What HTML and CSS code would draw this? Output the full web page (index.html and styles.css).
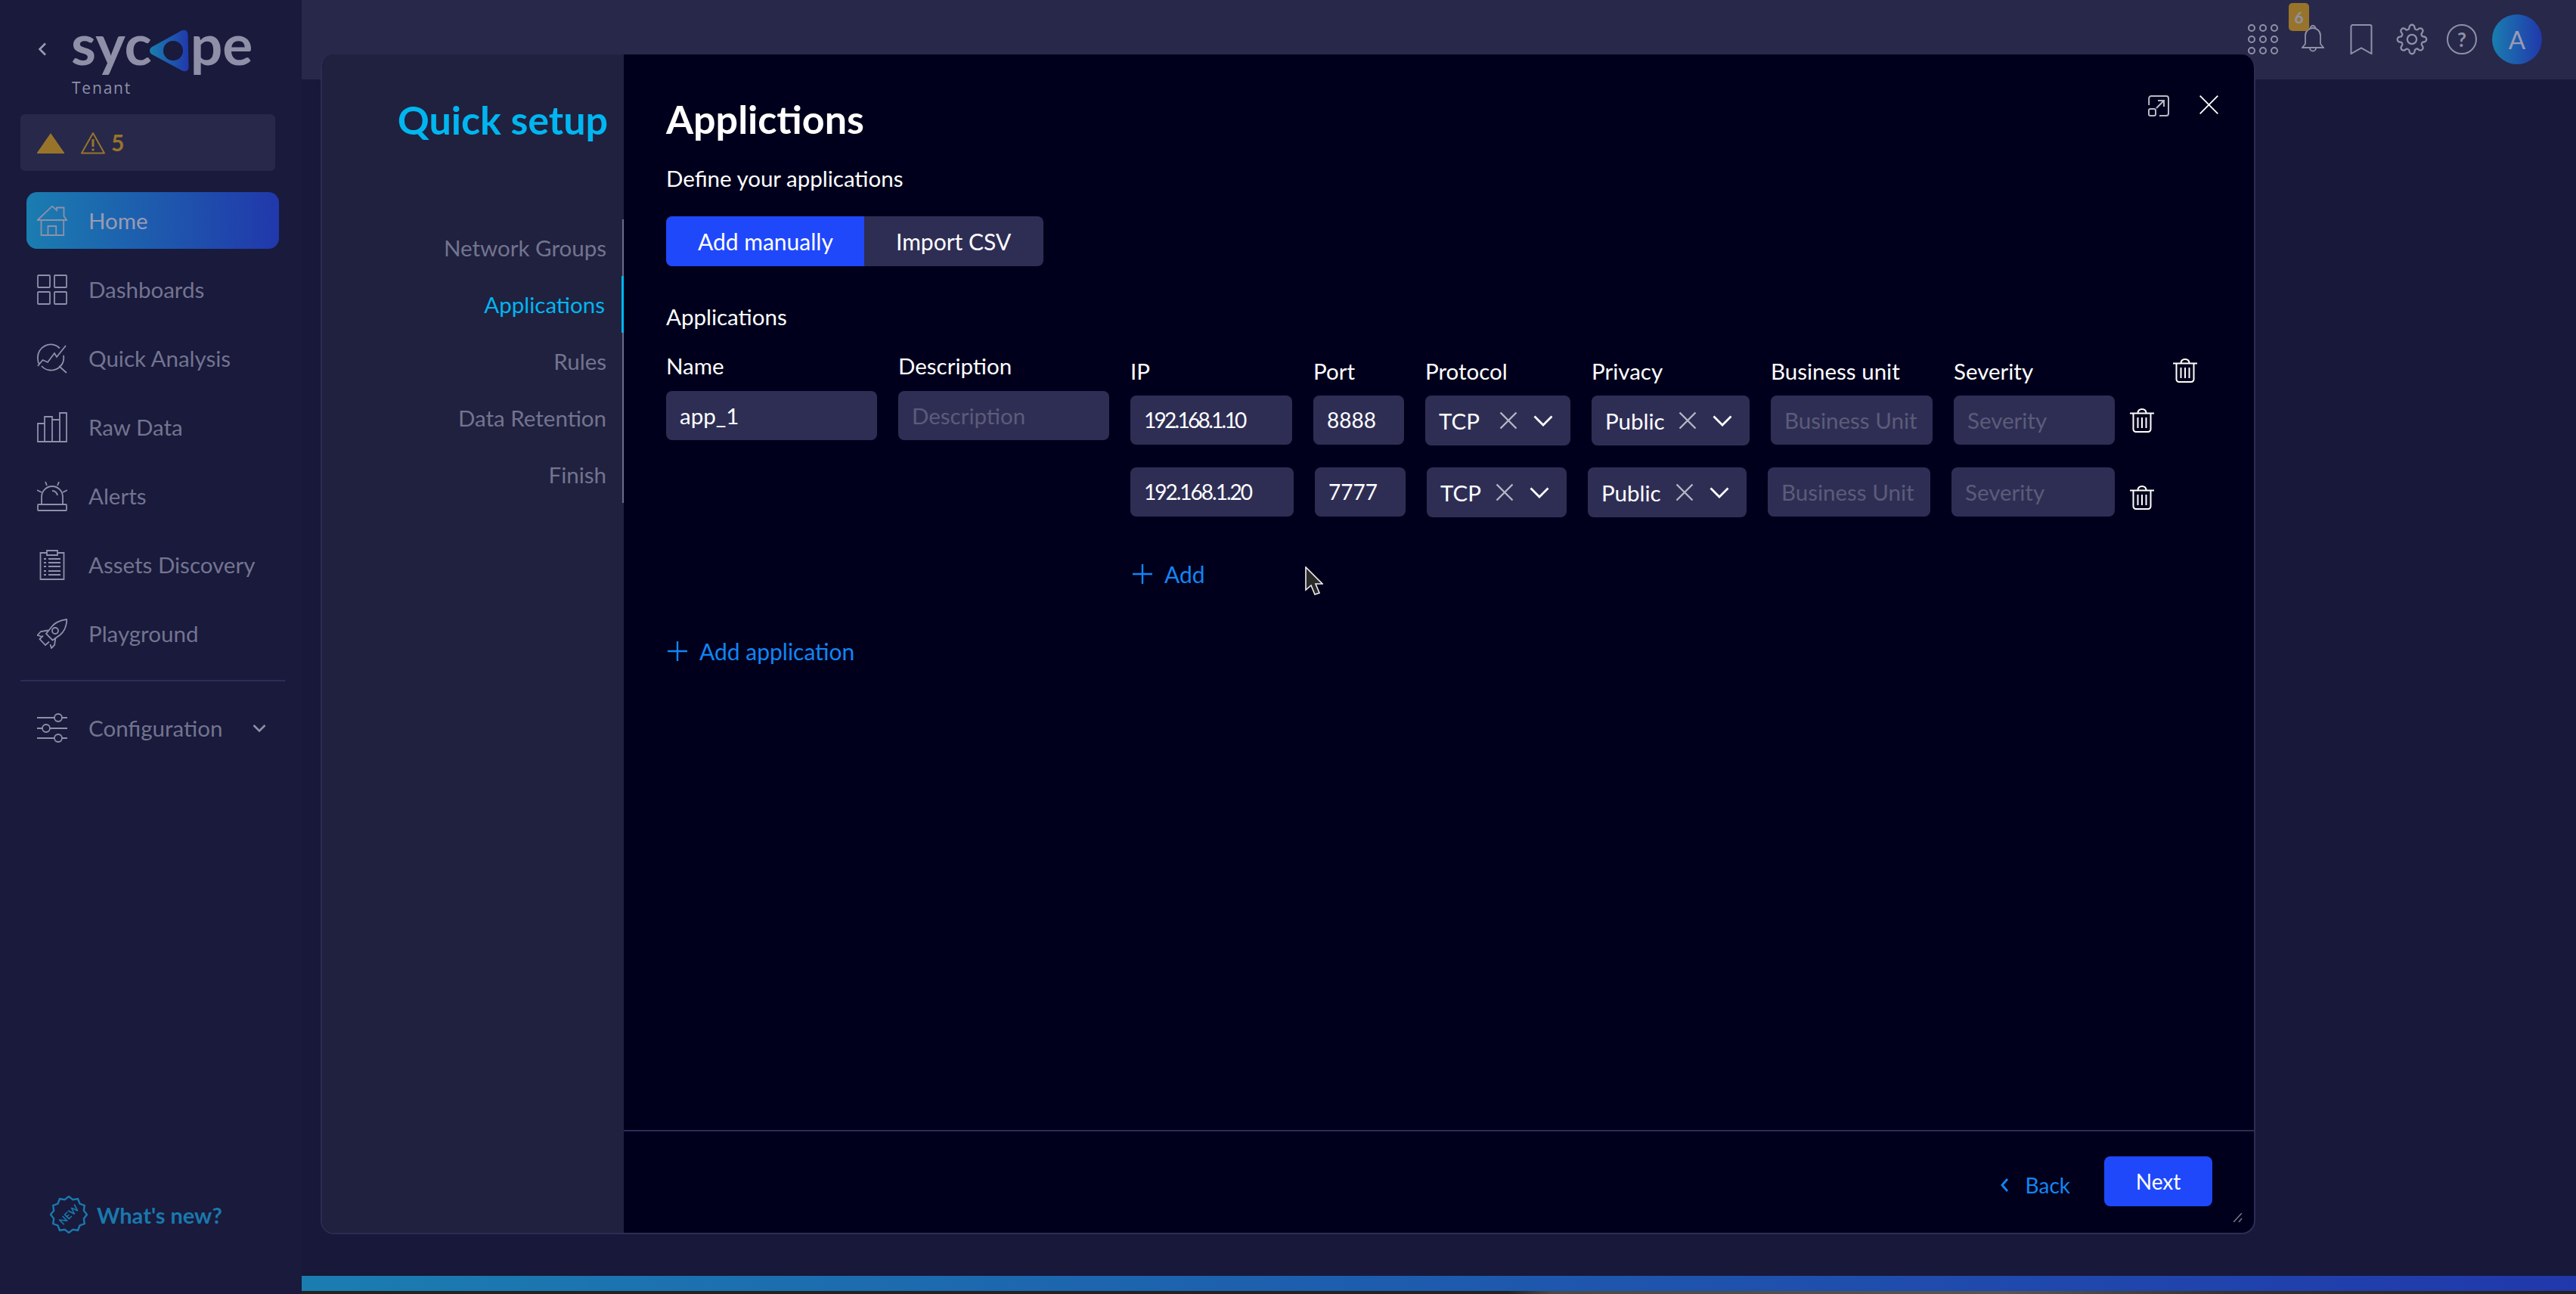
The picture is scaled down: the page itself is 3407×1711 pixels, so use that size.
FILE: index.html
```html
<!DOCTYPE html>
<html lang="en">
<head>
    <meta charset="UTF-8">
    <title>Quick setup</title>
    <link rel="stylesheet" href="styles.css">
</head>
<body>
    <svg class="defs" width="0" height="0">
        <defs>
            <symbol id="i-trash" viewBox="0 0 32 32">
                <path d="M0 6.5h32M4.500 6.500v21a3.500 3.500 0 0 0 3.500 3.500h16a3.500 3.500 0 0 0 3.500-3.500v-21M10.500 6.500c0-3.500 2-5.500 5.500-5.500s5.500 2 5.500 5.500M10.500 12v14M16 12v14M21.500 12v14" fill="none" stroke="currentColor" stroke-width="2"/>
            </symbol>
            <symbol id="i-x" viewBox="0 0 24 24">
                <path d="M1.500 1.500l21 21M22.500 1.500l-21 21" fill="none" stroke="currentColor" stroke-width="2.400"/>
            </symbol>
            <symbol id="i-chev" viewBox="0 0 26 15">
                <path d="M1.500 1.500L13 13 24.500 1.500" fill="none" stroke="currentColor" stroke-width="2.800"/>
            </symbol>
            <symbol id="i-plus" viewBox="0 0 26 26">
                <path d="M13 0v26M0 13h26" fill="none" stroke="currentColor" stroke-width="2.400"/>
            </symbol>
        </defs>
    </svg>

    <div class="app">
        <aside class="sidebar">
            <div class="brand">
                <svg class="brand-back" viewBox="0 0 12 18"><path d="M10 1.500L2.500 9l7.500 7.500" fill="none" stroke="currentColor" stroke-width="2.600"/></svg>
                <div class="brand-text">
                    <div class="logo">
                        <span>syc</span><span class="logo-end">pe</span>
                        <svg class="logo-mark" viewBox="0 0 52 56">
                            <defs><linearGradient id="g-logo"><stop offset="0" stop-color="#1a7db0"/><stop offset="1" stop-color="#2138ab"/></linearGradient></defs>
                            <path d="M3 23L42 1.500c4-2 8-.5 8.500 4.500l1 44c0 4.500-4.500 6.500-8.500 4.500L3 33c-4-2.500-4-7.500 0-10z" fill="url(#g-logo)"/>
                            <circle cx="31" cy="28" r="13" fill="#191a3c"/>
                        </svg>
                    </div>
                    <div class="tenant">Tenant</div>
                </div>
            </div>

            <div class="alert-box">
                <svg class="alert-solid" viewBox="0 0 36 27"><path d="M18 0L36 26v1H0v-1z" fill="currentColor"/></svg>
                <svg class="alert-line" viewBox="0 0 32 30"><path d="M16 2L31 28.500H1z" fill="none" stroke="currentColor" stroke-width="2" stroke-linejoin="round"/><path d="M16 10v10M16 22.500v3" stroke="currentColor" stroke-width="3" fill="none"/></svg>
                <span class="alert-count">5</span>
            </div>

            <nav class="nav">
                <a class="nav-item active">
                    <svg class="nav-icon" viewBox="0 0 40 40"><path d="M.7 19L20 .7l6 5.300V2.500h9.500v11.500l3.800 5zM5.500 19v20h29.700V19M14.500 39V27h10.700v12"/></svg>
                    <span>Home</span>
                </a>
                <a class="nav-item">
                    <svg class="nav-icon" viewBox="0 0 40 40"><rect x="1" y="1" width="16" height="16" rx="1"/><rect x="23" y="1" width="16" height="16" rx="1"/><rect x="1" y="23" width="16" height="16" rx="1"/><rect x="23" y="23" width="16" height="16" rx="1"/></svg>
                    <span>Dashboards</span>
                </a>
                <a class="nav-item">
                    <svg class="nav-icon" viewBox="0 0 40 40"><path d="M30 6.500A17 17 0 0 0 1 20c0 2.500.5 5 1.500 7M6 30a17 17 0 0 0 23 2 17 17 0 0 0 6-16M29 30l10 9M1 30l6.500-8 6.500 3 9-12 3 5L38 3"/></svg>
                    <span>Quick Analysis</span>
                </a>
                <a class="nav-item">
                    <svg class="nav-icon" viewBox="0 0 40 40"><path d="M1 15h9v24H1zM10 6h10v33H10zM20 10h10v29H20zM30 1h9v38h-9z"/></svg>
                    <span>Raw Data</span>
                </a>
                <a class="nav-item">
                    <svg class="nav-icon" viewBox="0 0 40 40"><rect x="1" y="31" width="38" height="8" rx="1"/><path d="M6 31V21a14 14 0 0 1 28 0v10M20 13c3 0 6 2 7 6M11 1l2 5M29 1l-2 5M0 12l6 3M40 12l-6 3"/></svg>
                    <span>Alerts</span>
                </a>
                <a class="nav-item">
                    <svg class="nav-icon" viewBox="0 0 40 40"><path d="M13 4H4.500v35h31V4H27M13 1h14v6H13zM15 12h16M15 17h16M15 22h16M15 28h16M15 33h16M9 12h3M9 17h3M9 22h3M9 28h3M9 33h3"/></svg>
                    <span>Assets Discovery</span>
                </a>
                <a class="nav-item">
                    <svg class="nav-icon" viewBox="0 0 40 40"><path d="M39.500 1C31 2 24 5 20 10L12 20l8.500 8.500 10-7C36 17 39 10 39.500 1zM14.500 15.500L5 17l-4.500 5 5 1.500M24.500 25.500L23 35l-4 4-1.500-5M8 22.500L3.500 27l7.500 8 5-4.500"/><circle cx="24" cy="16" r="4"/></svg>
                    <span>Playground</span>
                </a>
            </nav>

            <div class="nav-divider"></div>

            <a class="nav-item config">
                <svg class="nav-icon" viewBox="0 0 40 40"><path d="M0 6h23M33 6h7M0 20h7M17 20h23M0 33h23M33 33h7"/><circle cx="28" cy="6" r="5"/><circle cx="12" cy="20" r="5"/><circle cx="28" cy="33" r="5"/></svg>
                <span>Configuration</span>
                <svg class="config-chev" viewBox="0 0 18 12"><path d="M1.500 2L9 9.500 16.500 2" fill="none" stroke="currentColor" stroke-width="2.600"/></svg>
            </a>

            <a class="whats-new">
                <svg class="whats-icon" viewBox="0 0 50 50">
                    <polygon points="49,25 44.800,19.700 45.800,13 39.500,10.500 37,4.200 30.300,5.200 25,1 19.700,5.200 13,4.200 10.500,10.500 4.200,13 5.200,19.700 1,25 5.200,30.300 4.200,37 10.500,39.500 13,45.800 19.700,44.800 25,49 30.300,44.800 37,45.800 39.500,39.500 45.800,37 44.800,30.300" fill="none" stroke="currentColor" stroke-width="2.400"/>
                    <text class="whats-badge" x="25" y="30" text-anchor="middle" transform="rotate(-45 25 25)">NEW</text>
                </svg>
                <span>What's new?</span>
            </a>
        </aside>

        <main class="main">
            <header class="topbar">
                <svg class="top-icon grid-icon" viewBox="0 0 40 40"><circle cx="5" cy="5" r="4"/><circle cx="20" cy="5" r="4"/><circle cx="35" cy="5" r="4"/><circle cx="5" cy="20" r="4"/><circle cx="20" cy="20" r="4"/><circle cx="35" cy="20" r="4"/><circle cx="5" cy="35" r="4"/><circle cx="20" cy="35" r="4"/><circle cx="35" cy="35" r="4"/></svg>
                <div class="bell">
                    <svg class="top-icon bell-icon" viewBox="0 0 30 36"><path d="M1 30h28l-4-5V14C25 8 20 4 15 4S5 8 5 14v11zM11.500 4.500a3.500 3.500 0 1 1 7 0M11 30.500a4 4 0 0 0 8 0"/></svg>
                    <span class="bell-badge">6</span>
                </div>
                <svg class="top-icon mark-icon" viewBox="0 0 30 40"><path d="M1.500 39V3a2 2 0 0 1 2-2h23a2 2 0 0 1 2 2v36L15 31.500z"/></svg>
                <svg class="top-icon gear-icon" viewBox="0 0 24 24"><circle cx="12" cy="12" r="3.500"/><path d="M19.400 15a1.650 1.650 0 0 0 .33 1.820l.06.06a2 2 0 0 1 0 2.830 2 2 0 0 1-2.830 0l-.06-.06a1.650 1.650 0 0 0-1.820-.33 1.650 1.650 0 0 0-1 1.510V21a2 2 0 0 1-2 2 2 2 0 0 1-2-2v-.09A1.650 1.650 0 0 0 9 19.400a1.650 1.650 0 0 0-1.820.33l-.06.06a2 2 0 0 1-2.830 0 2 2 0 0 1 0-2.830l.06-.06a1.650 1.650 0 0 0 .33-1.820 1.650 1.650 0 0 0-1.510-1H3a2 2 0 0 1-2-2 2 2 0 0 1 2-2h.09A1.650 1.650 0 0 0 4.600 9a1.650 1.650 0 0 0-.33-1.820l-.06-.06a2 2 0 0 1 0-2.830 2 2 0 0 1 2.830 0l.06.06a1.650 1.650 0 0 0 1.820.33H9a1.650 1.650 0 0 0 1-1.510V3a2 2 0 0 1 2-2 2 2 0 0 1 2 2v.09a1.650 1.650 0 0 0 1 1.510 1.650 1.650 0 0 0 1.820-.33l.06-.06a2 2 0 0 1 2.830 0 2 2 0 0 1 0 2.830l-.06.06a1.650 1.650 0 0 0-.33 1.820V9a1.650 1.650 0 0 0 1.510 1H21a2 2 0 0 1 2 2 2 2 0 0 1-2 2h-.09a1.650 1.650 0 0 0-1.510 1z"/></svg>
                <div class="help">?</div>
                <div class="avatar">A</div>
            </header>
            <div class="content"></div>
            <div class="strip"></div>
            <div class="taskbar"></div>

            <section class="modal">
                <div class="modal-side">
                    <h2 class="side-title">Quick setup</h2>
                    <ul class="steps">
                        <li>Network Groups</li>
                        <li class="current">Applications</li>
                        <li>Rules</li>
                        <li>Data Retention</li>
                        <li>Finish</li>
                    </ul>
                </div>

                <div class="modal-body">
                    <div class="modal-tools">
                        <svg class="tool-expand" viewBox="0 0 28 28"><path d="M1.200 13V4a3 3 0 0 1 3-3H24a3 3 0 0 1 3 3v20a3 3 0 0 1-3 3h-9M11 17L20 8M13 7h8v8" fill="none" stroke="currentColor" stroke-width="2"/><rect x="1" y="18" width="9" height="9" rx="2" fill="none" stroke="currentColor" stroke-width="2"/></svg>
                        <svg class="tool-close" viewBox="0 0 25 25"><path d="M.7 .7l23.600 23.600M24.300 .7L.7 24.300" fill="none" stroke="currentColor" stroke-width="1.800"/></svg>
                    </div>

                    <div class="form">
                        <h1 class="form-title">Applictions</h1>
                        <p class="form-sub">Define your applications</p>
                        <div class="tabs">
                            <div class="tab selected">Add manually</div>
                            <div class="tab">Import CSV</div>
                        </div>
                        <div class="section-label">Applications</div>

                        <div class="app-block">
                            <div class="app-col">
                                <div class="col-label">Name</div>
                                <div class="field">app_1</div>
                            </div>
                            <div class="app-col">
                                <div class="col-label">Description</div>
                                <div class="field empty">Description</div>
                            </div>
                            <div class="rules">
                                <div class="rule-row rule-head">
                                    <div>IP</div>
                                    <div>Port</div>
                                    <div>Protocol</div>
                                    <div>Privacy</div>
                                    <div>Business unit</div>
                                    <div>Severity</div>
                                    <svg class="trash trash-app"><use href="#i-trash"/></svg>
                                </div>
                                <div class="rule-row row-one">
                                    <div class="field num ip">192.168.1.10</div>
                                    <div class="field num">8888</div>
                                    <div class="field select"><span>TCP</span><svg class="sel-x"><use href="#i-x"/></svg><svg class="sel-chev"><use href="#i-chev"/></svg></div>
                                    <div class="field select"><span>Public</span><svg class="sel-x"><use href="#i-x"/></svg><svg class="sel-chev"><use href="#i-chev"/></svg></div>
                                    <div class="field empty">Business Unit</div>
                                    <div class="field empty">Severity</div>
                                    <svg class="trash"><use href="#i-trash"/></svg>
                                </div>
                                <div class="rule-row row-two">
                                    <div class="field num ip">192.168.1.20</div>
                                    <div class="field num">7777</div>
                                    <div class="field select"><span>TCP</span><svg class="sel-x"><use href="#i-x"/></svg><svg class="sel-chev"><use href="#i-chev"/></svg></div>
                                    <div class="field select"><span>Public</span><svg class="sel-x"><use href="#i-x"/></svg><svg class="sel-chev"><use href="#i-chev"/></svg></div>
                                    <div class="field empty">Business Unit</div>
                                    <div class="field empty">Severity</div>
                                    <svg class="trash"><use href="#i-trash"/></svg>
                                </div>
                                <a class="link add-rule"><svg class="plus"><use href="#i-plus"/></svg>Add</a>
                            </div>
                        </div>

                        <a class="link add-app"><svg class="plus"><use href="#i-plus"/></svg>Add application</a>
                    </div>

                    <footer class="modal-foot">
                        <a class="link back"><svg class="back-chev" viewBox="0 0 12 20"><path d="M10 2L3 10l7 8" fill="none" stroke="currentColor" stroke-width="2.800"/></svg>Back</a>
                        <button class="next" type="button">Next</button>
                    </footer>
                    <svg class="resize" viewBox="0 0 13 12"><path d="M1 12L12 0M8 12l4-5" fill="none" stroke="#77778a" stroke-width="1.500"/></svg>
                </div>
            </section>

            <svg class="cursor" viewBox="0 0 24 38"><path d="M1 1v30l7-6 5 12 6-2-5-12h9z" fill="#2a2a2a" stroke="#eee" stroke-width="1.600"/></svg>
        </main>
    </div>
</body>
</html>
```

FILE: styles.css
```css
* {
    box-sizing: border-box;
}

html, body {
    margin: 0;
    height: 100%;
}

body {
    font-family: "Lato", "Open Sans", sans-serif;
    background-color: #17183a;
    color: #fff;
    overflow: hidden;
}

.defs {
    position: absolute;
}

.app {
    display: flex;
    height: 1711px;
}

/* left menu */
.sidebar {
    width: 399px;
    flex-shrink: 0;
    display: flex;
    flex-direction: column;
    background-color: #191a3c;
    color: #73748f;
    font-size: 29.500px;
}

.brand {
    height: 151px;
    display: flex;
    padding: 0 0 0 50px;
}

.brand-back {
    width: 12px;
    height: 18px;
    margin-top: 56px;
    color: #9a9bb2;
}

.brand-text {
    margin-left: 33px;
    color: #8f90a8;
}

.logo {
    position: relative;
    display: flex;
    width: 240px;
    height: 104px;
    padding-top: 12px;
    margin-left: -1px;
    font-size: 75px;
    font-weight: 700;
    line-height: 90px;
}

.logo-end {
    margin-left: 51px;
}

.logo-mark {
    position: absolute;
    left: 104px;
    top: 39px;
    width: 52px;
    height: 56px;
}

.tenant {
    font-size: 21px;
    line-height: 24px;
    letter-spacing: 1.800px;
    font-family: "Open Sans", sans-serif;
}

.alert-box {
    width: 337px;
    height: 75px;
    margin-left: 27px;
    display: flex;
    align-items: center;
    padding-left: 22px;
    background-color: #28284a;
    border-radius: 6px;
    color: #98742b;
}

.alert-solid {
    width: 36px;
    height: 27px;
    margin-top: 1px;
}

.alert-line {
    width: 32px;
    height: 30px;
    margin-left: 22px;
}

.alert-count {
    margin: -2px 0 0 8px;
    font-size: 30px;
    font-weight: 700;
}

.nav {
    display: flex;
    flex-direction: column;
    gap: 16px;
    margin-top: 28px;
}

.nav-item {
    width: 334px;
    height: 75px;
    margin-left: 35px;
    display: flex;
    align-items: center;
    padding-left: 14px;
    border-radius: 14px;
}

.nav-item.active {
    background: linear-gradient(90deg, #1a7db0, #2138ab);
    color: #9a9bb4;
}

.nav-icon {
    width: 40px;
    height: 40px;
    margin-right: 28px;
    fill: none;
    stroke: #8f90a8;
    stroke-width: 1.800;
}

.nav-divider {
    width: 350px;
    height: 2px;
    margin: 24px 0 0 27px;
    background-color: #2c2d55;
}

.config {
    margin-top: 24px;
    position: relative;
}

.config-chev {
    position: absolute;
    left: 299px;
    top: 32px;
    width: 18px;
    height: 12px;
    color: #8f90a8;
}

.whats-new {
    margin-top: auto;
    margin-bottom: 80px;
    padding-left: 66px;
    display: flex;
    align-items: center;
    gap: 12px;
    color: #1a78ac;
    font-size: 29px;
    font-weight: 700;
}

.whats-icon {
    width: 50px;
    height: 50px;
}

.whats-badge {
    font-size: 13px;
    font-weight: 700;
    fill: currentColor;
}

/* page behind the dialog */
.main {
    position: relative;
    flex: 1;
    display: flex;
    flex-direction: column;
}

.topbar {
    height: 105px;
    background-color: #28284a;
    display: flex;
    justify-content: flex-end;
    align-items: flex-start;
    padding-right: 45px;
    color: #8f90a8;
}

.top-icon {
    fill: none;
    stroke: #8f90a8;
    stroke-width: 2;
}

.grid-icon {
    width: 40px;
    height: 40px;
    margin-top: 32px;
}

.bell {
    position: relative;
    width: 32px;
    height: 38px;
    margin: 33px 0 0 31px;
}

.bell-icon {
    width: 30px;
    height: 36px;
    stroke-width: 1.800;
}

.bell-badge {
    position: absolute;
    left: -17px;
    top: -29px;
    width: 27px;
    height: 37px;
    background-color: #98742b;
    border-radius: 5px;
    text-align: center;
    font-size: 21px;
    font-weight: 700;
    line-height: 37px;
}

.mark-icon {
    width: 30px;
    height: 40px;
    margin: 32px 0 0 32px;
}

.gear-icon {
    width: 42px;
    height: 42px;
    margin: 31px 0 0 31px;
    stroke-width: 1.300;
}

.help {
    width: 40px;
    height: 40px;
    margin: 32px 0 0 25px;
    border: 2px solid #8f90a8;
    border-radius: 50%;
    text-align: center;
    font-size: 26px;
    font-weight: 700;
    line-height: 36px;
}

.avatar {
    width: 66px;
    height: 66px;
    margin: 19px 0 0 20px;
    border-radius: 50%;
    background: linear-gradient(90deg, #1a7db0, #2138ab);
    text-align: center;
    font-size: 33px;
    line-height: 66px;
    color: #9a9bb4;
}

.content {
    flex: 1;
    background-color: #17183a;
}

.strip {
    height: 20px;
    background: linear-gradient(90deg, #1a7db0, #2138ab);
}

.taskbar {
    height: 4px;
    background: linear-gradient(90deg, #222 0%, #222 53%, #4a4a4a 55%, #555 75%, #333 85%, #222 100%);
}

/* dialog */
.modal {
    position: absolute;
    left: 25px;
    top: 72px;
    width: 2559px;
    height: 1560px;
    display: flex;
    background-color: #00001c;
    border: 2px solid #2c2d55;
    border-top: 0;
    border-radius: 18px;
    overflow: hidden;
}

.modal-side {
    width: 399px;
    flex-shrink: 0;
    background-color: #20213f;
    padding-top: 56px;
}

.side-title {
    margin: 0;
    padding-right: 21px;
    text-align: right;
    color: #00b6f0;
    font-size: 52px;
    font-weight: 700;
    line-height: 60px;
}

.steps {
    list-style: none;
    margin: 102px 0 0;
    padding: 0;
    border-right: 2px solid #6b6c86;
    font-size: 29.500px;
    color: #73748f;
    text-align: right;
}

.steps li {
    position: relative;
    height: 75px;
    padding-right: 21px;
    line-height: 75px;
}

.steps li.current {
    color: #00b6f0;
    padding-right: 23px;
}

.steps li.current::after {
    content: "";
    position: absolute;
    right: -2px;
    top: 0;
    width: 3px;
    height: 75px;
    background-color: #00b6f0;
}

.modal-body {
    position: relative;
    flex: 1;
    display: flex;
    flex-direction: column;
}

.modal-tools {
    position: absolute;
    right: 47px;
    top: 54px;
    display: flex;
    gap: 40px;
    color: #fff;
}

.tool-expand {
    width: 28px;
    height: 28px;
    color: #b8b9c8;
}

.tool-close {
    width: 25px;
    height: 25px;
}

.form {
    flex: 1;
    padding: 55px 0 0 56px;
    font-size: 29.500px;
}

.form-title {
    margin: 0;
    font-size: 52px;
    font-weight: 700;
    line-height: 60px;
}

.form-sub {
    margin: 31px 0 0;
    line-height: 36px;
}

.tabs {
    display: flex;
    width: 499px;
    height: 66px;
    margin-top: 32px;
    border-radius: 8px;
    overflow: hidden;
    background-color: #2e2e55;
    font-size: 30px;
}

.tab {
    padding: 0 42px;
    line-height: 66px;
    white-space: nowrap;
}

.tab.selected {
    width: 262px;
    background-color: #1f48fb;
}

.section-label {
    margin-top: 49px;
    line-height: 36px;
}

.app-block {
    display: flex;
    gap: 28px;
    margin-top: 28px;
}

.app-col {
    width: 279px;
    margin-top: 1px;
}

.col-label {
    height: 36px;
    line-height: 36px;
}

.field {
    height: 65px;
    padding: 0 18px;
    background-color: #2e2e55;
    border-radius: 8px;
    line-height: 65px;
    white-space: nowrap;
    margin-top: 15px;
}

.field.empty {
    color: #5b5c78;
}

.field.num {
    font-size: 28px;
}

.field.select {
    height: 66px;
    display: flex;
    align-items: center;
    padding-right: 23px;
}

.sel-x {
    width: 24px;
    height: 24px;
    margin-left: auto;
    color: #b5b6c4;
}

.sel-chev {
    width: 26px;
    height: 15px;
    margin-left: 21px;
    color: #fff;
}

.rule-row {
    display: grid;
    column-gap: 28px;
    align-items: start;
}

.rule-head {
    grid-template-columns: 214px 120px 192px 209px 214px 213px 32px;
    height: 50px;
    margin-top: 8px;
    line-height: 36px;
}

.row-one {
    grid-template-columns: 214px 120px 192px 209px 214px 213px 32px;
}

.row-two {
    grid-template-columns: 216px 120px 185px 210px 215px 216px 32px;
    margin-top: 29px;
}

.row-one .field,
.row-two .field {
    margin-top: 0;
}

.row-one .ip {
    letter-spacing: -2.700px;
}

.row-two .ip {
    letter-spacing: -2px;
}

.trash {
    width: 32px;
    height: 32px;
    margin: 17px 0 0 -8px;
    color: #fff;
}

.row-two .trash {
    margin-top: 24px;
}

.trash-app {
    margin: 1px 0 0 49px;
}

.link {
    display: flex;
    align-items: center;
    color: #1186f5;
    font-size: 30px;
}

.plus {
    width: 26px;
    height: 26px;
    margin-right: 16px;
}

.add-rule {
    margin: 57px 0 0 3px;
    line-height: 36px;
}

.add-app {
    margin: 66px 0 0 2px;
    line-height: 36px;
}

.modal-foot {
    height: 136px;
    display: flex;
    justify-content: flex-end;
    align-items: flex-start;
    padding: 33px 55px 0 0;
    border-top: 2px solid #2c2d55;
    font-size: 28px;
}

.back {
    margin-top: 20px;
    font-size: 28px;
    line-height: 36px;
}

.back-chev {
    width: 12px;
    height: 20px;
    margin-right: 22px;
}

.next {
    width: 143px;
    height: 66px;
    margin-left: 45px;
    border: 0;
    border-radius: 8px;
    background-color: #1f48fb;
    color: #fff;
    font-family: inherit;
    font-size: 28px;
}

.resize {
    position: absolute;
    right: 15px;
    bottom: 14px;
    width: 13px;
    height: 12px;
}

.cursor {
    position: absolute;
    left: 1327px;
    top: 749px;
    width: 24px;
    height: 38px;
}
```
